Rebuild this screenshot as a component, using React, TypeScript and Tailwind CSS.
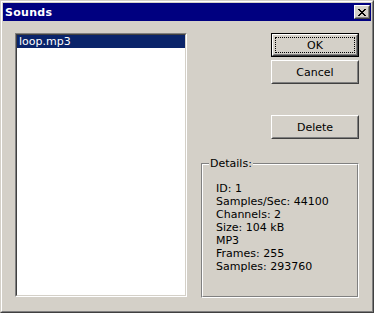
import React from "react";

const Btn = ({ label, def }: { label: string; def?: boolean }) => (
  <div
    className={
      "w-[88px] h-[24px] " +
      (def ? "border border-black" : "")
    }
  >
    <div className="w-full h-full border border-t-white border-l-white border-r-[#404040] border-b-[#404040]">
      <div
        className={
          "w-full h-full border border-t-[#d4d0c8] border-l-[#d4d0c8] border-r-[#808080] border-b-[#808080] flex items-center justify-center " +
          (def ? "p-px" : "")
        }
      >
        {def ? (
          <div className="w-full h-full border border-dotted border-black flex items-center justify-center">
            {label}
          </div>
        ) : (
          label
        )}
      </div>
    </div>
  </div>
);

export default function App() {
  const lines = [
    "ID: 1",
    "Samples/Sec: 44100",
    "Channels: 2",
    "Size: 104 kB",
    "MP3",
    "Frames: 255",
    "Samples: 293760",
  ];
  return (
    <div className="w-[374px] h-[313px] border border-t-[#d4d0c8] border-l-[#d4d0c8] border-r-[#404040] border-b-[#404040] bg-[#d4d0c8] font-['DejaVu_Sans',sans-serif] text-[11px] leading-[13px] text-black">
      <div className="h-full border border-t-white border-l-white border-r-[#808080] border-b-[#808080] p-px flex flex-col">
        <div className="h-[18px] bg-[#000080] flex items-center justify-between pl-[2px] pr-[1px]">
          <span className="text-white font-bold tracking-[0.3px]">Sounds</span>
          <div className="w-[16px] h-[14px] bg-[#d4d0c8] border border-t-white border-l-white border-r-[#404040] border-b-[#404040]">
            <div className="w-full h-full border border-t-[#d4d0c8] border-l-[#d4d0c8] border-r-[#808080] border-b-[#808080] flex items-center justify-center">
              <svg width="8" height="7" viewBox="0 0 8 7" shapeRendering="crispEdges">
                <path
                  fill="black"
                  d="M0 0h2v1h-2zM6 0h2v1h-2zM1 1h2v1h-2zM5 1h2v1h-2zM2 2h4v1h-4zM3 3h2v1h-2zM2 4h4v1h-4zM1 5h2v1h-2zM5 5h2v1h-2zM0 6h2v1h-2zM6 6h2v1h-2z"
                />
              </svg>
            </div>
          </div>
        </div>
        <div className="flex-1 flex pl-[12px] pt-[12px]">
          <div className="w-[172px] h-[264px] border border-t-[#808080] border-l-[#808080] border-r-white border-b-white">
            <div className="w-full h-full border border-t-[#404040] border-l-[#404040] border-r-[#d4d0c8] border-b-[#d4d0c8] bg-white">
              <div className="h-[13px] bg-[#0a246a] text-white pl-[2px] leading-[13px]">loop.mp3</div>
            </div>
          </div>
          <div className="ml-[14px] w-[158px] flex flex-col">
            <div className="flex flex-col items-end">
              <Btn label="OK" def />
              <div className="mt-[3px]">
                <Btn label="Cancel" />
              </div>
              <div className="mt-[31px]">
                <Btn label="Delete" />
              </div>
            </div>
            <div className="mt-[24px] relative h-[135px] border border-t-[#808080] border-l-[#808080] border-r-white border-b-white">
              <div className="h-full border border-t-white border-l-white border-r-[#808080] border-b-[#808080] pl-[13px] pt-[17px]">
                {lines.map((l) => (
                  <div key={l}>{l}</div>
                ))}
              </div>
              <span className="absolute left-[7px] top-[-7px] bg-[#d4d0c8] px-[1px] leading-[13px]">Details:</span>
            </div>
          </div>
        </div>
      </div>
    </div>
  );
}
